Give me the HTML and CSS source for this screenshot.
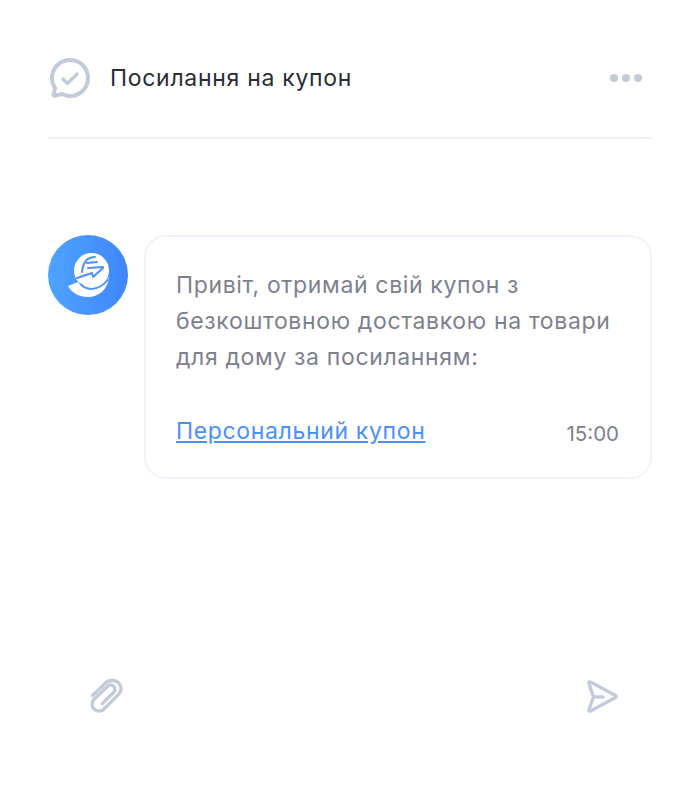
FILE: index.html
```html
<!DOCTYPE html>
<html lang="uk">

<head>
    <meta charset="utf-8">
    <title>Посилання на купон</title>
    <link rel="stylesheet" href="styles.css">
</head>

<body>
    <div class="page">
        <header class="header">
            <svg class="header-icon" width="44" height="44" viewBox="0 0 44 44" fill="none">
                <path d="M22 4C12 4 4 12 4 22c0 3.800 1.200 7.300 3.200 10.200L5.500 38c-.4 1.200.5 2.100 1.700 1.800l7-1.800C16.600 39.400 19.200 40 22 40c10 0 18-8 18-18S32 4 22 4Z" stroke="#c3cbdb" stroke-width="4" stroke-linejoin="round"/>
                <path d="M15 23l4.500 4.500L29 18" stroke="#c3cbdb" stroke-width="3.400" stroke-linecap="round" stroke-linejoin="round"/>
            </svg>
            <h1 class="title">Посилання на купон</h1>
            <div class="dots"><span></span><span></span><span></span></div>
        </header>

        <main class="chat">
            <div class="avatar">
                <svg width="80" height="80" viewBox="0 0 80 80" fill="none">
                    <defs>
                        <linearGradient id="avatarFill" x1="0" y1="0" x2="1" y2="0">
                            <stop offset="0" stop-color="#4fa3ff"/>
                            <stop offset="1" stop-color="#3f86fb"/>
                        </linearGradient>
                    </defs>
                    <circle cx="40" cy="40" r="40" fill="url(#avatarFill)"/>
                    <circle cx="43.500" cy="35.500" r="17.500" fill="#fff"/>
                    <path d="M20 51L30 47C36 58 52 58 61 42C60 55 50 62 40 62C31 62 24 58 20 51Z" fill="#fff"/>
                    <path d="M33 49C38 55 50 57 60 45" stroke="#4a93fd" stroke-width="1.500" stroke-linecap="round"/>
                    <path d="M47 22C40 22 35 27 34 37M39 28L49 27M40 33L55 32M29 43L44 38L45 42L55 33" stroke="#4a93fd" stroke-width="2" stroke-linecap="round" stroke-linejoin="round"/>
                </svg>
            </div>
            <div class="bubble">
                <p class="message">Привіт, отримай свій купон з безкоштовною доставкою на товари для дому за посиланням:</p>
                <div class="bubble-footer">
                    <a class="coupon-link" href="#">Персональний купон</a>
                    <span class="time">15:00</span>
                </div>
            </div>
        </main>

        <footer class="composer">
            <svg width="36" height="36" viewBox="0 1 33 33" fill="none">
                <path d="M5 17L17 5.500C20 2.500 26 2.500 29 5.500C32 8.500 32 13 29 16L16 29C13.500 32 9 32 6.500 29.500C4 27 4 23 6.500 20.500L19 8.500C20.500 7 23 7 24.500 8.500C26 10 26 12.500 24.500 14L14 24.500" stroke="#c3cbdb" stroke-width="3.100" stroke-linecap="round" stroke-linejoin="round"/>
            </svg>
            <svg width="36" height="36" viewBox="0 0 36 36" fill="none">
                <path d="M5 5.500C4.500 4 5.500 3.500 7 4.300L31.500 17.500C32.500 18.200 32.500 19 31.500 19.600L7 32.700C5.500 33.500 4.500 33 5 31.500L9.500 19H19M9.500 19L5 5.500" stroke="#c3cbdb" stroke-width="3.400" stroke-linecap="round" stroke-linejoin="round"/>
            </svg>
        </footer>
    </div>
</body>

</html>
```

FILE: styles.css
```css
* {
    box-sizing: border-box;
    padding: 0;
    margin: 0;
}

body {
    width: 700px;
    height: 795px;
    overflow: hidden;
    background-color: #fff;
    font-family: "Inter", "Noto Sans", sans-serif;
}

.page {
    display: flex;
    flex-direction: column;
    height: 100%;
    padding: 0 48px;
}

.header {
    display: flex;
    align-items: center;
    gap: 18px;
    height: 139px;
    padding-top: 19px;
    border-bottom: 2px solid #eef2f8;
}

.header-icon {
    flex: none;
}

.title {
    flex: 1;
    font-size: 23px;
    font-weight: 400;
    letter-spacing: 0.7px;
    color: #2a2c36;
}

.dots {
    display: flex;
    gap: 4px;
    margin-right: 10px;
}

.dots span {
    width: 8px;
    height: 8px;
    border-radius: 50%;
    background-color: #c3cbdb;
}

.chat {
    display: flex;
    align-items: flex-start;
    gap: 16px;
    margin-top: 96px;
}

.avatar {
    flex: none;
    width: 80px;
    height: 80px;
}

.bubble {
    flex: 1;
    height: 244px;
    padding: 30px 30px 0;
    border: 2px solid #eff4fb;
    border-radius: 22px;
}

.message {
    font-size: 23px;
    line-height: 36px;
    letter-spacing: 0.65px;
    color: #7d808f;
}

.bubble-footer {
    display: flex;
    justify-content: space-between;
    align-items: flex-end;
    margin-top: 41px;
    padding-right: 1px;
}

.coupon-link {
    font-size: 23px;
    line-height: 30px;
    letter-spacing: 0.65px;
    color: #4a90fb;
    text-underline-offset: 2px;
}

.time {
    font-size: 20.500px;
    line-height: 26px;
    margin-bottom: -1px;
    color: #7d808f;
}

.composer {
    display: flex;
    justify-content: space-between;
    margin-top: 199px;
    padding: 0 32px 0 39px;
}
```
